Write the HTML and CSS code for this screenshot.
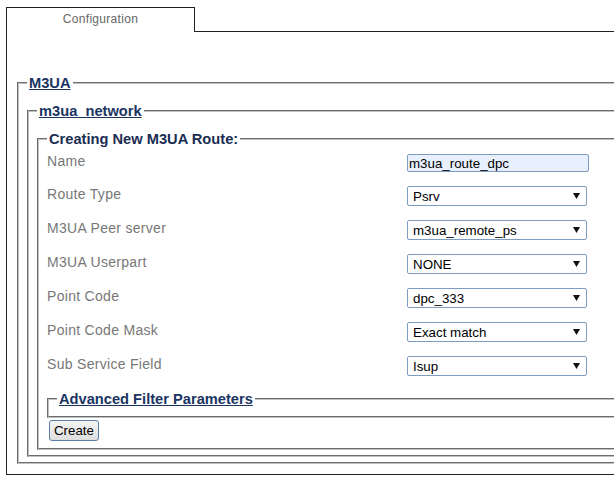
FILE: index.html
```html
<!DOCTYPE html>
<html>
<head>
<meta charset="utf-8">
<title>Configuration</title>
<link rel="stylesheet" href="styles.css">
</head>
<body>
<div class="tabs">
  <div class="tab">Configuration</div>
  <div class="tab-fill"></div>
</div>
<div class="panel">
  <fieldset class="fs fs-m3ua">
    <legend class="lg link">M3UA</legend>
    <fieldset class="fs fs-net">
      <legend class="lg link">m3ua_network</legend>
      <fieldset class="fs fs-route">
        <legend class="lg">Creating New M3UA Route:</legend>
        <div class="form">
          <div class="label">Name</div>
          <div class="ctrl"><input class="input" type="text" value="m3ua_route_dpc"></div>

          <div class="label">Route Type</div>
          <div class="ctrl"><div class="select"><span>Psrv</span><svg class="arrow" width="7" height="6" viewBox="0 0 7 6"><path d="M0 0H7L3.5 6Z" fill="#111"/></svg></div></div>

          <div class="label">M3UA Peer server</div>
          <div class="ctrl"><div class="select"><span>m3ua_remote_ps</span><svg class="arrow" width="7" height="6" viewBox="0 0 7 6"><path d="M0 0H7L3.5 6Z" fill="#111"/></svg></div></div>

          <div class="label">M3UA Userpart</div>
          <div class="ctrl"><div class="select"><span>NONE</span><svg class="arrow" width="7" height="6" viewBox="0 0 7 6"><path d="M0 0H7L3.5 6Z" fill="#111"/></svg></div></div>

          <div class="label">Point Code</div>
          <div class="ctrl"><div class="select"><span>dpc_333</span><svg class="arrow" width="7" height="6" viewBox="0 0 7 6"><path d="M0 0H7L3.5 6Z" fill="#111"/></svg></div></div>

          <div class="label">Point Code Mask</div>
          <div class="ctrl"><div class="select"><span>Exact match</span><svg class="arrow" width="7" height="6" viewBox="0 0 7 6"><path d="M0 0H7L3.5 6Z" fill="#111"/></svg></div></div>

          <div class="label">Sub Service Field</div>
          <div class="ctrl"><div class="select"><span>Isup</span><svg class="arrow" width="7" height="6" viewBox="0 0 7 6"><path d="M0 0H7L3.5 6Z" fill="#111"/></svg></div></div>
        </div>
        <fieldset class="fs fs-adv">
          <legend class="lg link">Advanced Filter Parameters</legend>
        </fieldset>
        <button class="btn" type="button">Create</button>
      </fieldset>
    </fieldset>
  </fieldset>
</div>
</body>
</html>
```

FILE: styles.css
```css
html, body {
  overflow: hidden;
}
body {
  margin: 7px 0 0 6px;
  font-family: "Liberation Sans", Arial, sans-serif;
  background: #fff;
  width: 720px;
}
.tabs {
  display: flex;
  height: 25px;
}
.tab {
  box-sizing: border-box;
  width: 189px;
  height: 25px;
  border: 1px solid #222;
  border-bottom: none;
  text-align: center;
  font-size: 12px;
  letter-spacing: 0.3px;
  line-height: 14px;
  padding-top: 4px;
  color: #666;
}
.tab-fill {
  flex: 1;
  box-sizing: border-box;
  height: 25px;
  border-bottom: 1px solid #222;
}
.panel {
  border-left: 1px solid #222;
  border-bottom: 1px solid #222;
  padding: 43px 0 10px 10px;
}
.fs {
  margin: 0;
  min-width: 0;
  border: 2px groove #c0c0c0;
  padding: 12px 0 5px 8px;
}
.fs-route {
  padding: 0 0 7px 8px;
}
.fs-adv {
  margin-top: 8px;
  padding: 0 0 9px 8px;
}
.lg {
  padding: 0 2px;
  font-size: 14.67px;
  line-height: 16px;
  font-weight: bold;
  color: #1b2d52;
}
.link {
  color: #1a3563;
  text-decoration: underline;
}
.form {
  display: grid;
  grid-template-columns: 360px auto;
  grid-template-rows: 32px repeat(6, 34px);
  align-items: center;
}
.label {
  font-size: 14px;
  letter-spacing: 0.3px;
  color: #777;
  margin-bottom: 4px;
}
.ctrl {
  display: flex;
  align-items: center;
}
.input {
  box-sizing: border-box;
  width: 182px;
  height: 18px;
  margin: 0;
  border: 1px solid #7e9cbf;
  border-radius: 2px;
  background: #e8f0fe;
  padding: 0 1px;
  font-family: "Liberation Sans", Arial, sans-serif;
  font-size: 13.33px;
  color: #000;
  outline: none;
}
.select {
  box-sizing: border-box;
  width: 180px;
  height: 20px;
  border: 1px solid #7e9cbf;
  border-radius: 2px;
  background: #fff;
  padding: 0 6px 0 5px;
  display: flex;
  align-items: center;
  justify-content: space-between;
  font-size: 13.33px;
  color: #000;
}
.arrow {
  display: block;
}
.btn {
  display: block;
  box-sizing: border-box;
  margin: 2px 0 0 2px;
  width: 50px;
  height: 21px;
  padding: 0;
  border: 1px solid #5b7fa6;
  border-radius: 3px;
  background: linear-gradient(#f4f4f4, #dedede);
  font-family: "Liberation Sans", Arial, sans-serif;
  font-size: 13.33px;
  color: #000;
}
```
